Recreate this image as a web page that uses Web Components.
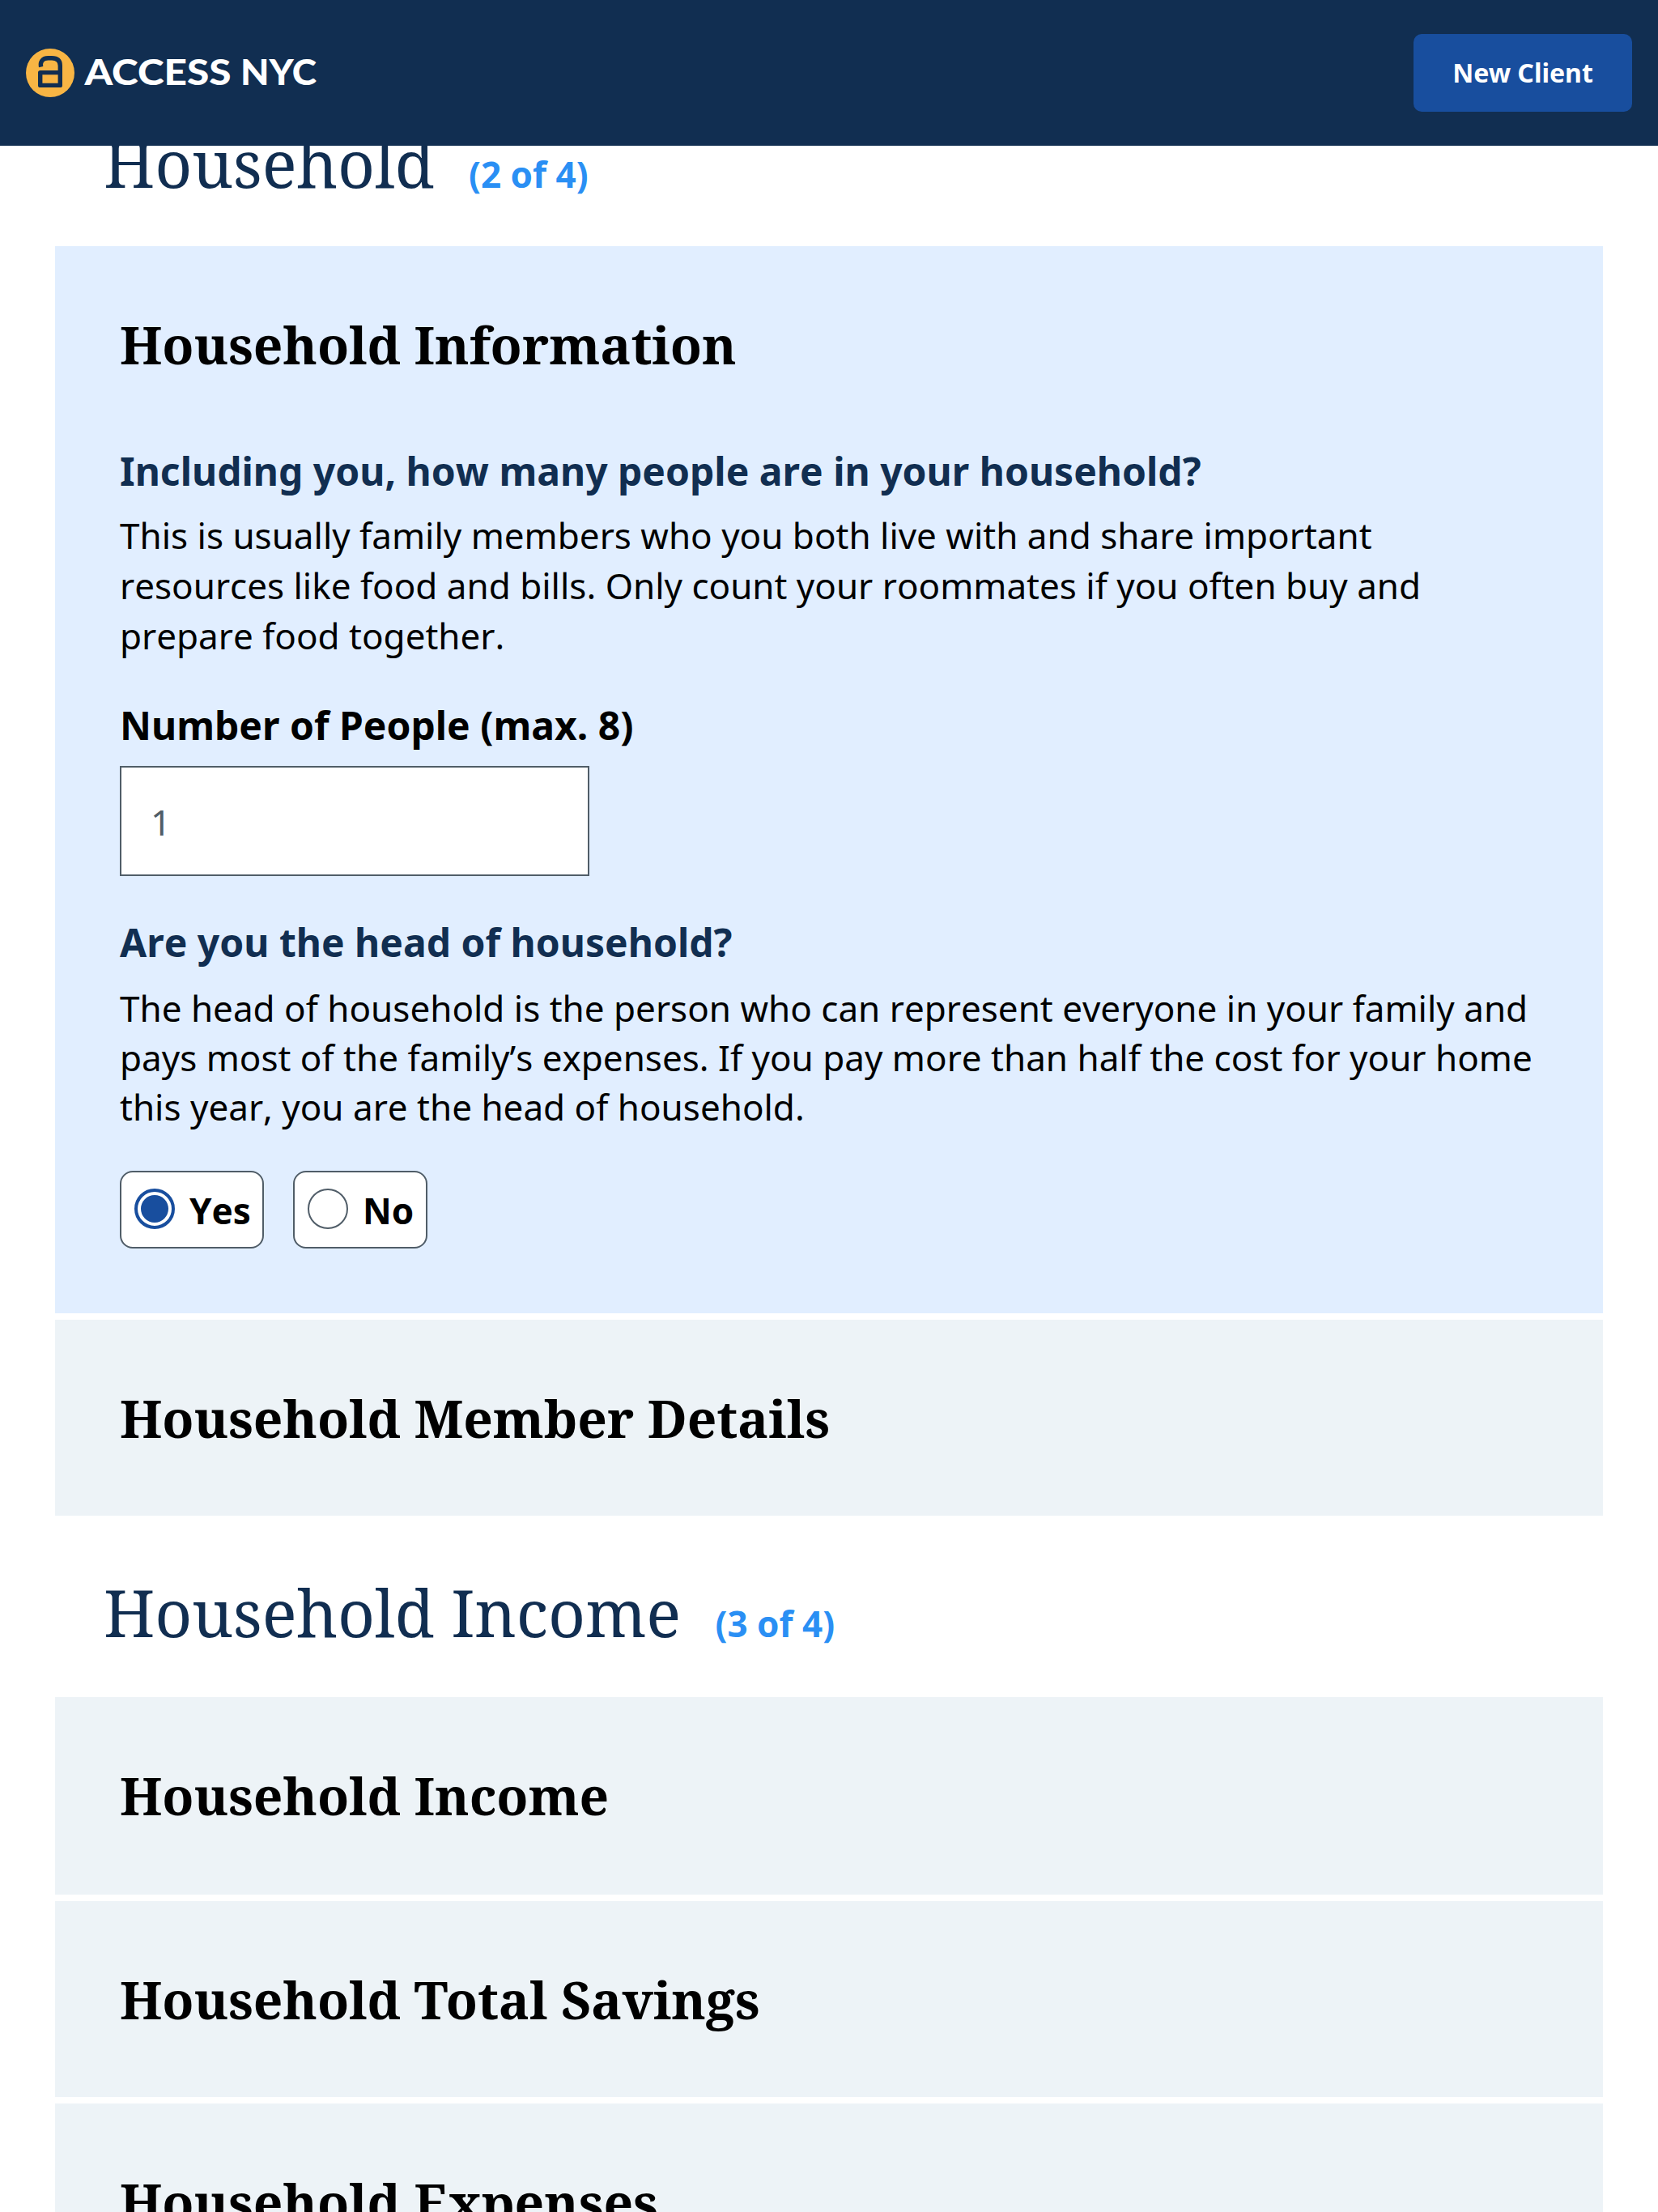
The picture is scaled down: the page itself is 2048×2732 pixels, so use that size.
<!DOCTYPE html>
<html lang="en">
<head>
<meta charset="utf-8">
<title>ACCESS NYC</title>
<style>
  html, body { margin: 0; height: 2732px; overflow: hidden; background: #fff; }
  body { font-family: "Noto Sans", sans-serif; font-kerning: none; color: #000; }
</style>
</head>
<body>
<access-header>
  <access-logo slot="brand"></access-logo>
  <access-button>New Client</access-button>
</access-header>
<screener-page>
  <screener-section step="(2 of 4)" style="--head-gap: 48px">
    <span slot="heading">Household</span>
    <screener-card active>
      <span slot="title">Household Information</span>
      <form-question>
        <span slot="question">Including you, how many people are in your household?</span>
        <span slot="help">This is usually family members who you both live with and share important<br>resources like food and bills. Only count your roommates if you often buy and<br>prepare food together.</span>
        <number-field label="Number of People (max. 8)" value="1"></number-field>
      </form-question>
      <form-question style="--top: 48px; --help-gap: 18px; --help-line: 61px; --control-gap: 48px">
        <span slot="question">Are you the head of household?</span>
        <span slot="help">The head of household is the person who can represent everyone in your family and<br>pays most of the family’s expenses. If you pay more than half the cost for your home<br>this year, you are the head of household.</span>
        <radio-group>
          <radio-option checked style="width: 178px">Yes</radio-option>
          <radio-option style="width: 166px">No</radio-option>
        </radio-group>
      </form-question>
    </screener-card>
    <screener-card><span slot="title">Household Member Details</span></screener-card>
  </screener-section>
  <screener-section step="(3 of 4)">
    <span slot="heading">Household Income</span>
    <screener-card style="height: 244px"><span slot="title">Household Income</span></screener-card>
    <screener-card><span slot="title">Household Total Savings</span></screener-card>
    <screener-card><span slot="title">Household Expenses</span></screener-card>
  </screener-section>
</screener-page>
<script>
const define = (name, render) => customElements.define(name, class extends HTMLElement {
  constructor() { super(); this.attachShadow({ mode: 'open' }); }
  connectedCallback() { this.shadowRoot.innerHTML = render(this); }
});

define('access-header', () => `
  <style>
    :host { display: flex; align-items: center; justify-content: space-between; box-sizing: border-box;
      height: 180px; padding: 0 32px; background: #112e51; position: sticky; top: 0; z-index: 1; }
  </style>
  <slot name="brand"></slot><slot></slot>`);

define('access-logo', () => `
  <style>
    :host { display: block; width: 364px; height: 60px; }
    svg { display: block; overflow: visible; }
    text { font: 900 43.5px Lato, sans-serif; font-kerning: normal; fill: #fff; }
  </style>
  <svg width="364" height="60" viewBox="32 60 364 60">
    <circle cx="62" cy="90" r="30" fill="#f8b544"/>
    <path d="M50.6 82.6C49.4 77 52 71.7 59.5 71.7H64Q74.3 71.7 74.3 81V105.4H49.7V89.6H74.3" fill="none" stroke="#112e51" stroke-width="5.4" stroke-linejoin="round"/>
    <text x="104.5" y="104.7" textLength="181" lengthAdjust="spacingAndGlyphs">ACCESS</text>
    <text x="297" y="104.7" textLength="94" lengthAdjust="spacingAndGlyphs">NYC</text>
  </svg>`);

define('access-button', () => `
  <style>
    :host { display: block; }
    button { display: block; width: 270px; height: 96px; padding: 0; border: 0; border-radius: 10px;
      background: #184e9e; color: #fff; font: bold 32px/44px "Noto Sans", sans-serif; }
  </style>
  <button><slot></slot></button>`);

define('screener-page', () => `
  <style>:host { display: flex; flex-direction: column; gap: 63px; margin-top: -35px; padding: 0 68px; }</style>
  <slot></slot>`);

define('screener-section', el => `
  <style>
    :host { display: block; }
    header { display: flex; align-items: baseline; gap: 42.5px; height: 111px; padding-left: 60px;
      margin-bottom: var(--head-gap, 50px); }
    h2 { margin: 0; font: 400 80px/111px "Noto Serif", serif; font-kerning: none; letter-spacing: -0.18px; color: #112e51; }
    .step { font-weight: bold; font-size: 44px; line-height: 60px; color: #2a8ff4; }
    .cards { display: flex; flex-direction: column; gap: 8px; }
  </style>
  <header><h2><slot name="heading"></slot></h2><span class="step">${el.getAttribute('step')}</span></header>
  <div class="cards"><slot></slot></div>`);

define('screener-card', () => `
  <style>
    :host { display: block; box-sizing: border-box; height: 242px; padding: 80px; background: #edf3f7; }
    :host([active]) { height: auto; background: #e1eeff; }
    h3 { margin: 0; font: bold 64px/83px "Noto Serif", serif; font-kerning: normal; letter-spacing: -0.1px; }
    :host([active]) h3 { margin-bottom: 81px; }
  </style>
  <h3><slot name="title"></slot></h3><slot></slot>`);

define('form-question', () => `
  <style>
    :host { display: block; margin-top: var(--top, 0); }
    h4 { margin: 0; font-size: 48px; line-height: 67px; color: #112e51; }
    p { margin: var(--help-gap, 15px) 0 var(--control-gap, 46px); font-size: 44px; line-height: var(--help-line, 62px); white-space: nowrap; }
  </style>
  <h4><slot name="question"></slot></h4><p><slot name="help"></slot></p><slot></slot>`);

define('number-field', el => `
  <style>
    :host { display: block; }
    label { display: block; margin-bottom: 17px; font-weight: bold; font-size: 48px; line-height: 67px; }
    .field { display: flex; align-items: center; box-sizing: border-box; width: 580px; height: 136px;
      padding: 2px 36px 0; border: 2px solid #505d68; background: #fff; color: #505d68; font-size: 44px; line-height: 64px; }
  </style>
  <label>${el.getAttribute('label')}</label><div class="field">${el.getAttribute('value')}</div>`);

define('radio-group', () => `
  <style>:host { display: flex; gap: 36px; }</style><slot></slot>`);

define('radio-option', () => `
  <style>
    :host { display: flex; box-sizing: border-box; height: 96px; padding: 0 16px; border: 2px solid #505d68;
      border-radius: 16px; background: #fff; font-weight: bold; font-size: 44px; line-height: 62px; }
    i { box-sizing: border-box; flex: none; width: 50px; height: 50px; margin: 20px 18px 0 0;
      border: 2px solid #505d68; border-radius: 50%; }
    :host([checked]) i { border: 4px solid #184e9e; padding: 4px; background: #184e9e content-box; }
    span { padding-top: 16px; }
  </style>
  <i></i><span><slot></slot></span>`);
</script>
</body>
</html>
